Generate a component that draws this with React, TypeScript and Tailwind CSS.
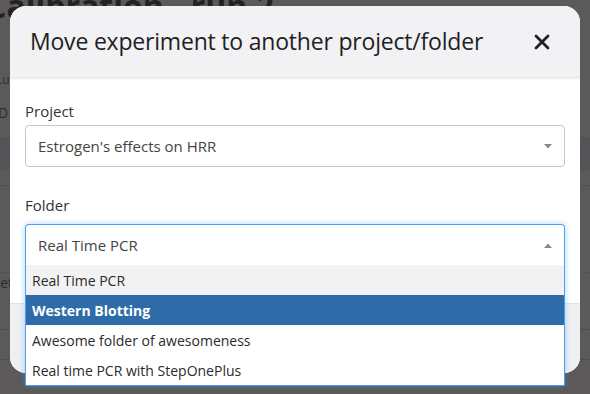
import React from "react";

const font = { fontFamily: '"Open Sans", "Noto Sans", sans-serif' };

export default function App() {
  const options = [
    { label: "Real Time PCR", cls: "bg-[#f2f2f2] text-[#2b2b2b]" },
    { label: "Western Blotting", cls: "bg-[#2d6ca9] text-white font-bold" },
    { label: "Awesome folder of awesomeness", cls: "bg-white text-[#2b2b2b]" },
    { label: "Real time PCR with StepOnePlus", cls: "bg-white text-[#2b2b2b]" },
  ];
  return (
    <div className="relative w-[590px] h-[394px] overflow-hidden bg-[#5b5959]" style={font}>
      {/* background page (behind overlay) */}
      <div className="flex flex-col">
        <div className="-mt-[14px] -ml-[14px] text-[32px] font-bold text-[#232122] leading-[40px]">Calibration - run 2</div>
        <div className="h-[46px]" />
        <div className="text-[12px] text-[#2e2c2d] leading-[16px] -ml-[4px]">Lu a</div>
        <div className="h-[15px]" />
        <div className="text-[14px] text-[#2e2c2d] leading-[20px] -ml-[6px]">ID</div>
        <div className="h-[14px]" />
        <div className="h-[33px] bg-[#555357]" />
        <div className="h-[16px] border-b border-[#515050]" />
        <div className="h-[87px] border-b border-[#555353]" />
        <div className="text-[14px] text-[#2e2c2d] leading-[20px] -ml-[10px]">Get</div>
        <div className="h-[20px]" />
        <div className="h-[17px] border-b border-[#4f4e4e]" />
        <div className="h-[30px] border-b border-[#4f4e4e]" />
      </div>

      {/* modal */}
      <div className="absolute left-[10px] top-[6px] w-[570px] h-[367px] rounded-[16px] bg-white flex flex-col overflow-hidden">
        <div className="h-[71px] bg-[#f2f2f4] flex items-center justify-between pl-[20px] pr-[30px] shadow-[0_1px_3px_rgba(0,0,0,0.15)] relative z-10">
          <div className="text-[23px] text-[#1f1f24] tracking-[-0.2px]">Move experiment to another project/folder</div>
          <svg width="16" height="16" viewBox="0 0 16 16" className="mt-[1px]">
            <path d="M2 2 L14 14 M14 2 L2 14" stroke="#1f1f24" strokeWidth="2.8" strokeLinecap="round" />
          </svg>
        </div>
        <div className="flex-1 flex flex-col px-[15px] pt-[24px]">
          <div className="text-[15px] font-medium text-[#333] leading-[20px]">Project</div>
          <div className="mt-[4px] h-[42px] border border-[#c6c4d2] rounded-[4px] flex items-center justify-between pl-[12px] pr-[12px]">
            <span className="text-[15px] text-[#444]">Estrogen's effects on HRR</span>
            <svg width="8" height="5" viewBox="0 0 8 5"><path d="M0 0 L8 0 L4 4.5 Z" fill="#888" /></svg>
          </div>
          <div className="mt-[28px] text-[15px] font-medium text-[#333] leading-[20px]">Folder</div>
        </div>
        <div className="h-[70px] bg-[#f0f0f2] border-t border-[#e2e2e6]" />
      </div>

      {/* folder select with open dropdown */}
      <div className="absolute left-[25px] top-[224px] w-[540px] flex flex-col shadow-[0_0_6px_rgba(74,159,245,0.45)] rounded-[4px]">
        <div className="h-[41px] border border-[#4a9ff5] border-b-0 rounded-t-[4px] bg-white flex items-center justify-between pl-[12px] pr-[12px]">
          <span className="text-[15px] text-[#444]">Real Time PCR</span>
          <svg width="8" height="5" viewBox="0 0 8 5"><path d="M0 5 L8 5 L4 0.5 Z" fill="#888" /></svg>
        </div>
        <div className="border border-t-0 border-[#4a9ff5] rounded-b-[2px] overflow-hidden bg-white">
          {options.map((o) => (
            <div key={o.label} className={`h-[30px] flex items-center pl-[6px] text-[14px] ${o.cls}`}>
              {o.label}
            </div>
          ))}
        </div>
      </div>
    </div>
  );
}
